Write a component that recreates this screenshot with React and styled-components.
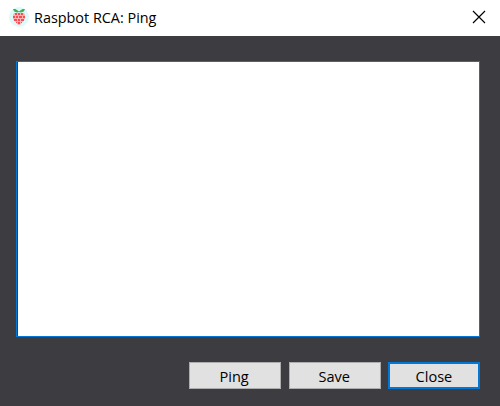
import React from 'react';
import styled, { createGlobalStyle } from 'styled-components';

const GlobalStyle = createGlobalStyle`
  * { box-sizing: border-box; }
  body { margin: 0; overflow: hidden; }
`;

const Window = styled.div`
  display: flex;
  flex-direction: column;
  width: 500px;
  height: 406px;
  background: #3d3c41;
  color: #000;
  font-family: 'Open Sans', 'Noto Sans', sans-serif;
  font-size: 15px;
`;

const TitleBar = styled.header`
  display: flex;
  align-items: center;
  flex: 0 0 36px;
  padding: 0 14px 2px 9px;
  background: #fff;
`;

const Title = styled.h1`
  flex: 1;
  margin: 0 0 0 5px;
  font-size: 15px;
  font-weight: 400;
  line-height: 20px;
  transform: scaleX(0.96);
  transform-origin: left;
`;

const CloseIconButton = styled.button`
  display: flex;
  padding: 0;
  border: 0;
  background: none;
`;

const Content = styled.main`
  display: flex;
  flex-direction: column;
  flex: 1;
  gap: 25px;
  padding: 25px 20px 17px 16px;
`;

const Output = styled.textarea`
  display: block;
  width: 464px;
  height: 276px;
  padding: 0;
  border: 1px solid #0078d7;
  border-radius: 0;
  outline: none;
  resize: none;
  background: #fff;
  box-shadow: inset 1px 0 #3d3c41;
`;

const Actions = styled.footer`
  display: flex;
  justify-content: flex-end;
  gap: 8px;
`;

const Button = styled.button`
  width: 92px;
  height: 27px;
  margin-left: ${({ $primary }) => ($primary ? '-1px' : '0')};
  padding: 0 1px 0 0;
  border: ${({ $primary }) => ($primary ? '2px solid #0078d7' : '1px solid #adadad')};
  border-radius: 0;
  background: #e1e1e1;
  color: #000;
  font: inherit;
  line-height: 20px;
`;

const Label = styled.span`
  display: inline-block;
  transform: scaleX(0.97);
`;

function RaspberryIcon() {
  return (
    <svg width="20" height="20" viewBox="0 0 20 20" aria-hidden="true">
      <circle cx="10" cy="10" r="10" fill="#dcfafa" />
      <path d="M5 6h10l1 2v4l-2 2-3 4H9l-3-4-2-2V8z" fill="#ffb3b5" />
      <g fill="#fa4b50" shapeRendering="crispEdges">
        <path d="M6 6h2v2H6zM9 6h2v2H9zM12 6h2v2h-2z" />
        <path d="M4 9h2v2H4zM7 9h2v2H7zM10 9h3v2h-3zM14 9h2v2h-2z" />
        <path d="M5 12h3v2H5zM9 12h2v2H9zM12 12h3v2h-3z" />
        <path d="M7 15h1v1H7zM12 15h1v1h-1zM9 15h2v2H9z" />
      </g>
      <path d="M4 2h2.5l3.5 2.4L13.5 2H16l-1.2 2.5-3 .9L10 4.9l-1.8.5-3-.9z" fill="#45ae50" />
    </svg>
  );
}

function CloseIcon() {
  return (
    <svg width="14" height="14" viewBox="0 0 14 14" aria-hidden="true">
      <path d="M1 1l12 12M13 1L1 13" stroke="#000" strokeWidth="1.15" />
    </svg>
  );
}

export default function App() {
  return (
    <>
      <GlobalStyle />
      <Window>
        <TitleBar>
          <RaspberryIcon />
          <Title>Raspbot RCA: Ping</Title>
          <CloseIconButton aria-label="Close window"><CloseIcon /></CloseIconButton>
        </TitleBar>
        <Content>
          <Output aria-label="Ping output" readOnly />
          <Actions>
            <Button><Label>Ping</Label></Button>
            <Button><Label>Save</Label></Button>
            <Button $primary><Label>Close</Label></Button>
          </Actions>
        </Content>
      </Window>
    </>
  );
}
